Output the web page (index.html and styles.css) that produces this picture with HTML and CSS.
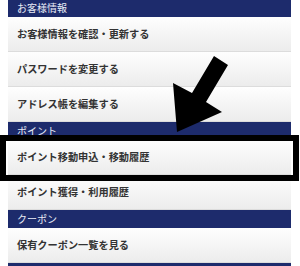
FILE: index.html
```html
<!DOCTYPE html>
<html lang="ja">
<head>
    <meta charset="UTF-8">
    <meta name="viewport" content="width=device-width, initial-scale=1.0">
    <title>マイページ</title>
    <link rel="stylesheet" href="styles.css">
</head>
<body>

    <div class="menu">
        <div class="menu-head first">お客様情報</div>
        <a class="menu-item" href="#">お客様情報を確認・更新する</a>
        <a class="menu-item" href="#">パスワードを変更する</a>
        <a class="menu-item" href="#">アドレス帳を編集する</a>

        <div class="menu-head">ポイント</div>
        <a class="menu-item" href="#">ポイント移動申込・移動履歴</a>
        <a class="menu-item" href="#">ポイント獲得・利用履歴</a>

        <div class="menu-head">クーポン</div>
        <a class="menu-item" href="#">保有クーポン一覧を見る</a>
        <div class="menu-head"></div>
    </div>

    <div class="highlight"></div>

    <svg class="arrow" width="300" height="266" viewBox="0 0 300 266">
        <polygon points="214,56 228,65 206,102 222,112 177,132 173,83 192,93" fill="#000"/>
    </svg>

</body>
</html>
```

FILE: styles.css
```css
body {
    margin: 0;
    padding: 0;
    background-color: #fff;
    font-family: "Noto Sans CJK JP", "Noto Sans", sans-serif;
    overflow: hidden;
}

.menu {
    margin: 0 9px 0 8px;
}

.menu-head {
    height: 18px;
    line-height: 18px;
    padding-left: 9px;
    background-color: #1d2b6c;
    color: #e9ebf6;
    font-size: 10px;
}

.menu-head.first {
    height: 17px;
    line-height: 16px;
}

.menu-item {
    display: block;
    height: 34px;
    line-height: 34px;
    padding-left: 9px;
    border-bottom: 1px solid #dcdcdc;
    background: linear-gradient(#fefefe, #ececec);
    color: #333;
    font-size: 10.2px;
    font-weight: bold;
    text-decoration: none;
}

.highlight {
    position: absolute;
    left: 0;
    top: 135px;
    width: 287px;
    height: 34px;
    border: 6px solid #000;
}

.arrow {
    position: absolute;
    left: 0;
    top: 0;
}
```
